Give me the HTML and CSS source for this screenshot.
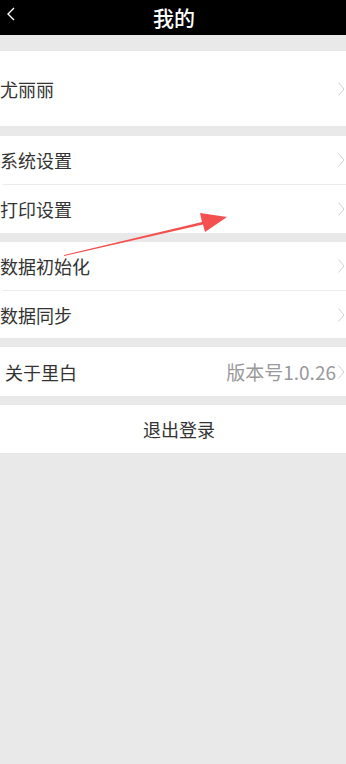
FILE: index.html
```html
<!DOCTYPE html>
<html lang="zh">
<head>
<meta charset="utf-8">
<link rel="stylesheet" href="styles.css">
</head>
<body>
<div class="page">
  <header class="topbar">
    <svg class="back" width="10" height="14" viewBox="0 0 10 14"><path d="M8 1 L2 7 L8 13" fill="none" stroke="#fff" stroke-width="1.4"/></svg>
    <h1 class="title">我的</h1>
  </header>

  <section class="group group-first">
    <div class="row row-tall">
      <span class="label">尤丽丽</span>
      <svg class="chev" width="7" height="14" viewBox="0 0 7 14"><path d="M0.5 0.5 L6 7 L0.5 13.5" fill="none" stroke="#d0d0d0" stroke-width="1"/></svg>
    </div>
  </section>

  <section class="group group-a">
    <div class="row">
      <span class="label">系统设置</span>
      <svg class="chev" width="7" height="14" viewBox="0 0 7 14"><path d="M0.5 0.5 L6 7 L0.5 13.5" fill="none" stroke="#d0d0d0" stroke-width="1"/></svg>
    </div>
    <div class="sep"></div>
    <div class="row">
      <span class="label">打印设置</span>
      <svg class="chev" width="7" height="14" viewBox="0 0 7 14"><path d="M0.5 0.5 L6 7 L0.5 13.5" fill="none" stroke="#d0d0d0" stroke-width="1"/></svg>
    </div>
  </section>

  <section class="group group-b">
    <div class="row">
      <span class="label">数据初始化</span>
      <svg class="chev" width="7" height="14" viewBox="0 0 7 14"><path d="M0.5 0.5 L6 7 L0.5 13.5" fill="none" stroke="#d0d0d0" stroke-width="1"/></svg>
    </div>
    <div class="sep"></div>
    <div class="row row-short">
      <span class="label">数据同步</span>
      <svg class="chev" width="7" height="14" viewBox="0 0 7 14"><path d="M0.5 0.5 L6 7 L0.5 13.5" fill="none" stroke="#d0d0d0" stroke-width="1"/></svg>
    </div>
  </section>

  <section class="group group-b">
    <div class="row row-about">
      <span class="label">关于里白</span>
      <span class="value">版本号1.0.26</span>
      <svg class="chev" width="7" height="14" viewBox="0 0 7 14"><path d="M0.5 0.5 L6 7 L0.5 13.5" fill="none" stroke="#d0d0d0" stroke-width="1"/></svg>
    </div>
  </section>

  <section class="group group-b">
    <div class="row logout">退出登录</div>
  </section>

  <svg class="arrow" width="346" height="764" viewBox="0 0 346 764">
    <polygon points="64,255 202,222 200,213 227,217 205,232 203,224.5 64,256" fill="#f4504f"/>
  </svg>
</div>
</body>
</html>
```

FILE: styles.css
```css
html, body {
  margin: 0;
  padding: 0;
}
body {
  background: #e9e9e9;
  font-family: "Noto Sans CJK SC", "Noto Sans", sans-serif;
  color: #333;
}
.page {
  position: relative;
  width: 346px;
  min-height: 764px;
}
.topbar {
  position: relative;
  height: 35px;
  background: #000;
  display: flex;
  align-items: center;
  justify-content: center;
}
.back {
  position: absolute;
  left: 6px;
  top: 7px;
}
.title {
  margin: 0;
  color: #fff;
  font-size: 21px;
  font-weight: 500;
  line-height: 35px;
  padding-left: 2px;
}
.group {
  background: #fff;
  margin-top: 9px;
}
.group-first {
  margin-top: 16px;
}
.group-a {
  margin-top: 10px;
}
.row {
  height: 48px;
  display: flex;
  align-items: center;
  font-size: 18px;
  color: #333;
}
.row-tall {
  height: 75px;
}
.row-short {
  height: 47px;
}
.row-about {
  height: 49px;
  padding-left: 5px;
}
.label {
  flex: 1;
  line-height: 1;
}
.value {
  color: #999;
  font-size: 19px;
  line-height: 1;
  margin-right: 2px;
}
.chev {
  margin-right: 1px;
  flex: none;
}
.sep {
  height: 1px;
  background: #ececec;
  margin-left: 3px;
}
.logout {
  justify-content: center;
  padding-left: 12px;
  font-size: 18px;
}
.arrow {
  position: absolute;
  left: 0;
  top: 0;
  pointer-events: none;
}
```
